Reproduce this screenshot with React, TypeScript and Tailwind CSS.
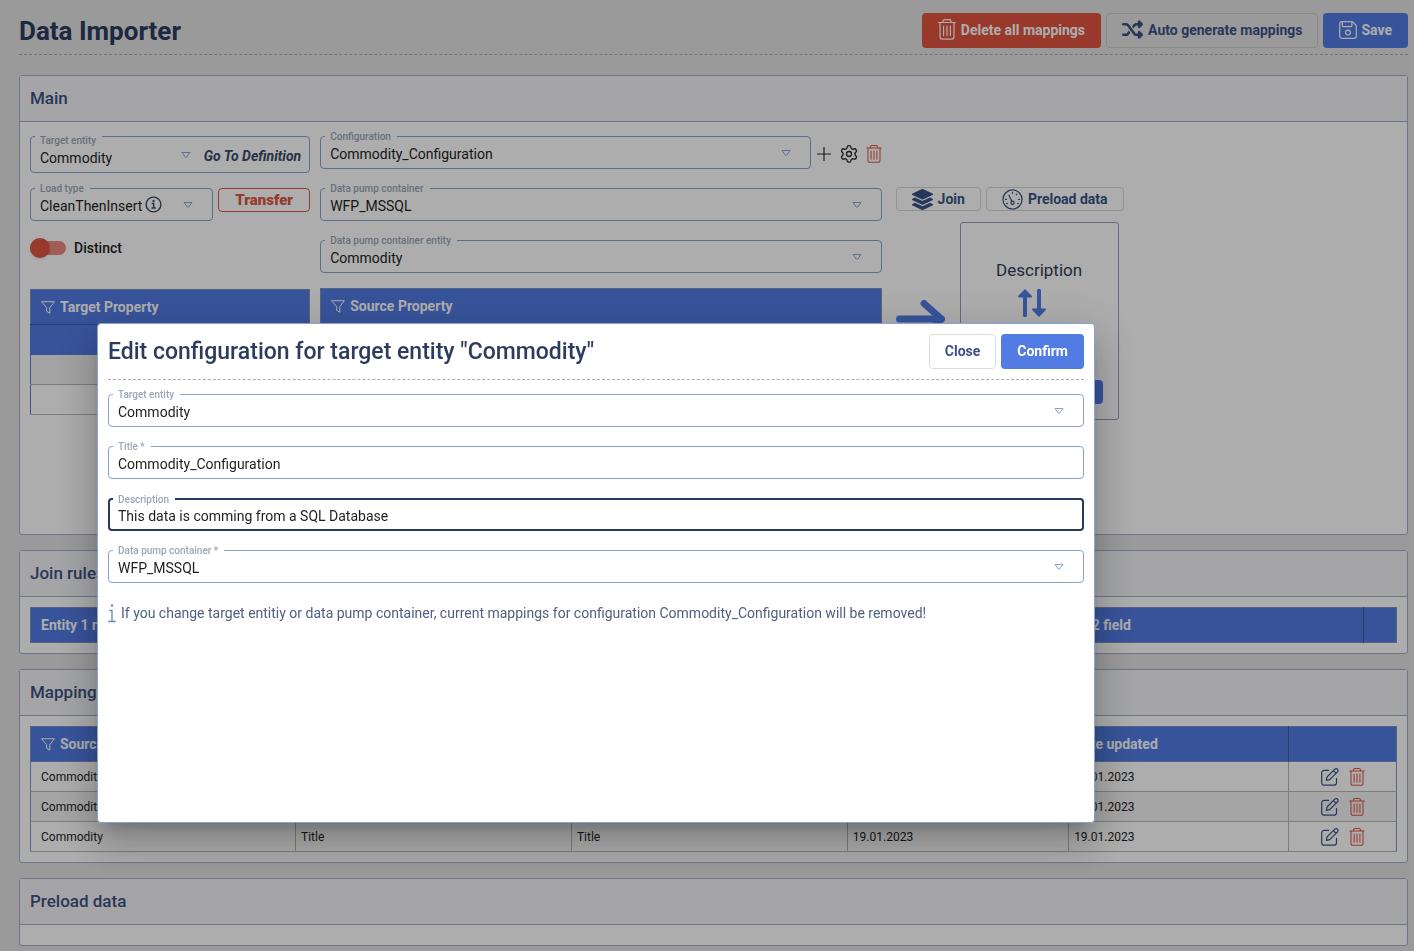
import { useState, type ReactNode } from "react";
import { FaLayerGroup } from "react-icons/fa";
import { FaShuffle } from "react-icons/fa6";
import { Settings } from "lucide-react";

type IconProps = { className?: string };

function TrashIcon({ className }: IconProps) {
  return (
    <svg viewBox="0 0 18 21" fill="none" stroke="currentColor" strokeWidth="1.2" strokeLinecap="round" className={className} aria-hidden="true">
      <path d="M.6 3.5h16.8M5 3.5V2.2C5 1.3 5.6.7 6.4.7h5.2c.8 0 1.4.6 1.4 1.5v1.3" />
      <path d="M2 3.5v14.2c0 1.4 1 2.4 2.3 2.4h9.4c1.3 0 2.3-1 2.3-2.4V3.5" />
      <path d="M5.6 7v9.6M9 7v9.6M12.4 7v9.6" />
    </svg>
  );
}

function SaveIcon({ className }: IconProps) {
  return (
    <svg viewBox="0 0 18 18" fill="none" stroke="currentColor" strokeWidth="1.2" strokeLinejoin="round" className={className} aria-hidden="true">
      <path d="M2.9.7h10.6l3.8 3.8v10.6a2.2 2.2 0 0 1-2.2 2.2H2.9a2.2 2.2 0 0 1-2.2-2.2V2.9A2.2 2.2 0 0 1 2.9.7Z" />
      <path d="M3.3.9v3.7c0 .6.4 1 1 1h7.6c.6 0 1-.4 1-1V.9" />
      <circle cx="9" cy="11.6" r="2.4" />
    </svg>
  );
}

function FilterIcon({ className }: IconProps) {
  return (
    <svg viewBox="0 0 14 13" fill="none" stroke="currentColor" strokeWidth="1" strokeLinejoin="round" className={className} aria-hidden="true">
      <path d="M.6.7h12.8L8.8 6.6v5.7l-3.2-2.1V6.6Z" />
    </svg>
  );
}

function CaretIcon({ className }: IconProps) {
  return (
    <svg viewBox="0 0 10 7" fill="none" stroke="currentColor" strokeWidth="1" strokeLinejoin="round" className={className} aria-hidden="true">
      <path d="M1 1h8L5.6 5.6q-.6.6-1.2 0Z" />
    </svg>
  );
}

function InfoIcon({ className }: IconProps) {
  return (
    <svg viewBox="0 0 18 18" fill="none" stroke="currentColor" strokeWidth="1.5" className={className} aria-hidden="true">
      <circle cx="9" cy="9" r="7.8" />
      <path d="M7 8h2.2v4.5M6.8 12.7h4.6" />
      <circle cx="9" cy="5.3" r="1.2" fill="currentColor" stroke="none" />
    </svg>
  );
}

function GaugeIcon({ className }: IconProps) {
  return (
    <svg viewBox="0 0 22 22" fill="none" stroke="currentColor" strokeWidth="1.3" strokeLinecap="round" className={className} aria-hidden="true">
      <circle cx="11" cy="11" r="10" />
      <circle cx="11" cy="14.5" r="1.7" />
      <path d="m10.3 12.9-3-6.4M11 3.6v.9M15.4 5.4l-.5.7M18.4 10.8h-1M3.6 10.8h1M17 15.4l-.7-.4M5 15.4l.7-.4" />
    </svg>
  );
}

function EditIcon({ className }: IconProps) {
  return (
    <svg viewBox="0 0 18 18" fill="none" stroke="currentColor" strokeWidth="1.2" strokeLinecap="round" strokeLinejoin="round" className={className} aria-hidden="true">
      <path d="M7.6 2.4H3.2A2.5 2.5 0 0 0 .7 4.9v9.8a2.5 2.5 0 0 0 2.5 2.5H13a2.5 2.5 0 0 0 2.5-2.5v-4.4" />
      <path d="M5.4 12.4 6 9l7.8-7.8a1.9 1.9 0 0 1 2.7 2.7l-7.8 7.8ZM12.4 2.6l2.7 2.7" />
    </svg>
  );
}

function SwapIcon({ className }: IconProps) {
  return (
    <svg viewBox="0 0 28 28" fill="currentColor" className={className} aria-hidden="true">
      <path d="M7 0 .3 6.8C-.3 7.6 0 8.5 1 8.5h4v17.7a2 2 0 0 0 4 0V8.5h4c1 0 1.3-.9.7-1.7Z" />
      <path d="m21 28 6.7-6.8c.6-.8.3-1.7-.7-1.7h-4V1.8a2 2 0 0 0-4 0v17.7h-4c-1 0-1.3.9-.7 1.7Z" />
    </svg>
  );
}

type FieldProps = {
  id: string;
  label: string;
  value: string;
  kind?: "select" | "text";
  focused?: boolean;
  tall?: boolean;
  className?: string;
  children?: ReactNode;
};

function Field({ id, label, value, kind = "select", focused, tall, className = "", children }: FieldProps) {
  const [text, setText] = useState(value);
  return (
    <fieldset
      className={`min-w-0 rounded ${focused ? "border-2 border-[#26385c]" : "border border-[#8aa2d0]"} ${tall ? "h-[37px]" : "h-[33px]"} ${className}`}
    >
      <legend className={`flex h-0 items-center pr-[6px] pl-[5px] text-[10px] font-medium text-[#9ba6b8] ${focused ? "ml-[3px]" : "ml-1"}`}>
        <label htmlFor={id} className={tall ? "mt-2" : ""}>{label}</label>
      </legend>
      <div className={`flex items-center ${tall ? "h-[35px]" : focused ? "h-[29px]" : "h-[31px]"}`}>
        <div className="relative min-w-0 flex-1">
          {kind === "select" ? (
            <>
              <select
                id={id}
                defaultValue={value}
                className={`block w-full appearance-none bg-transparent pr-10 pl-[9px] text-sm text-[#1e1e1e] outline-none ${tall ? "pt-[7px]" : "pt-[3px]"}`}
              >
                <option>{value}</option>
              </select>
              <CaretIcon
                className={`pointer-events-none absolute top-1/2 h-[7px] w-[10px] -translate-y-1/2 text-[#8aa2d0] ${tall ? "right-[9px]" : "right-[19px]"}`}
              />
            </>
          ) : (
            <input
              id={id}
              value={text}
              onChange={(e) => setText(e.target.value)}
              className={`block w-full bg-transparent pt-[3px] text-sm text-[#1e1e1e] outline-none ${focused ? "pl-2" : "pl-[9px]"}`}
            />
          )}
        </div>
        {children}
      </div>
    </fieldset>
  );
}

function Panel({ title, children, className = "" }: { title: string; children?: ReactNode; className?: string }) {
  return (
    <section className="rounded-[3px] border border-[#a2afc6] bg-white">
      <h2 className="flex h-[46px] items-center border-b border-[#a2afc6] bg-[#f3f4f7] px-[10px] text-[17px] font-medium text-[#3c5284]">
        {title}
      </h2>
      <div className={`p-[10px] ${className}`}>{children}</div>
    </section>
  );
}

const mappings = [
  { id: 1, source: "Commodity", field: "Code", target: "Code", created: "19.01.2023", updated: "19.01.2023" },
  { id: 2, source: "Commodity", field: "Name", target: "Name", created: "19.01.2023", updated: "19.01.2023" },
  { id: 3, source: "Commodity", field: "Title", target: "Title", created: "19.01.2023", updated: "19.01.2023" },
];

function PropertyTable({ title }: { title: string }) {
  return (
    <table className="w-full border-collapse border border-[#8094bd]">
      <thead>
        <tr className="h-[35px] bg-[#527be4] text-left text-sm text-white">
          <th className="px-[10px] font-bold">
            <span className="flex items-center gap-[5px]">
              <FilterIcon className="h-[13px] w-[14px]" />
              {title}
            </span>
          </th>
        </tr>
      </thead>
      <tbody className="border-x border-[#527be4]">
        <tr className="h-[30px] border-t border-[#3d5ba8] bg-[#527be4]"><td /></tr>
        <tr className="h-[30px] border-b border-[#b8b8b8] bg-[#f0f0f0]"><td /></tr>
        <tr className="h-[30px] border-b border-[#b8b8b8]"><td /></tr>
      </tbody>
    </table>
  );
}

function MainPanel() {
  return (
    <Panel title="Main" className="grid min-h-[412px] grid-cols-[minmax(0,280fr)_minmax(0,561fr)_minmax(0,505fr)] items-start gap-[10px] pt-[14px]">
      <div>
        <Field id="target" label="Target entity" value="Commodity" tall>
          <a href="#definition" className="pt-[3px] pr-2 pl-1 text-sm font-bold text-[#3b4a68] italic">Go To Definition</a>
        </Field>
        <div className="mt-[15px] flex items-start gap-[5px]">
          <div className="relative flex-1">
            <Field id="load" label="Load type" value="CleanThenInsert" />
            <InfoIcon className="absolute top-2 left-[115px] size-[17px] text-[#3b4a68]" />
          </div>
          <button className="flex h-6 w-[92px] items-center justify-center rounded border border-[#e05442] text-[15px] font-black text-[#e05442]">
            Transfer
          </button>
        </div>
        <label className="mt-[17px] mb-[31px] flex h-5 items-center gap-2 text-sm font-medium text-[#1e1e1e]">
          <input
            type="checkbox"
            className="relative h-[14px] w-9 appearance-none rounded-full bg-[#e98a7e] before:absolute before:-top-[3px] before:left-0 before:size-5 before:rounded-full before:bg-[#e05442] before:shadow"
          />
          Distinct
        </label>
        <PropertyTable title="Target Property" />
      </div>

      <div>
        <div className="flex items-center">
          <Field id="config" label="Configuration" value="Commodity_Configuration" className="flex-1" />
          <div className="flex items-center gap-[7px] pt-[2px] pl-[5px] text-[#2b2b2b]">
            <button aria-label="Add configuration">
              <svg viewBox="0 0 16 16" stroke="currentColor" strokeWidth="1.2" className="size-4" aria-hidden="true">
                <path d="M8 1v14M1 8h14" />
              </svg>
            </button>
            <button aria-label="Edit configuration"><Settings className="size-5" strokeWidth={1.6} /></button>
            <button aria-label="Delete configuration"><TrashIcon className="h-[18px] w-4 text-[#e05442]" /></button>
          </div>
        </div>
        <Field id="container" label="Data pump container" value="WFP_MSSQL" className="mt-[19px]" />
        <Field id="entity" label="Data pump container entity" value="Commodity" className="mt-[19px] mb-[15px]" />
        <PropertyTable title="Source Property" />
      </div>

      <div className="pl-1">
        <div className="mt-[51px] flex gap-[5px] text-sm font-bold text-[#3c5284]">
          <button className="flex h-6 items-center gap-[5px] rounded border border-[#d6d6d6] px-[15px]">
            <FaLayerGroup className="size-[21px]" />
            Join
          </button>
          <button className="flex h-6 items-center gap-[5px] rounded border border-[#d6d6d6] px-[15px]">
            <GaugeIcon className="size-[21px]" />
            Preload data
          </button>
        </div>
        <div className="mt-[11px] flex items-center gap-[15px]">
          <svg viewBox="0 0 49 42" fill="none" stroke="currentColor" strokeWidth="7" strokeLinecap="round" strokeLinejoin="round" className="h-[42px] w-[49px] text-[#527be4]" aria-hidden="true">
            <path d="M3.5 19h42M28 3.500 45.500 19 28 36.500" />
          </svg>
          <div className="flex h-[198px] w-[159px] flex-col items-center rounded-[3px] border border-[#94a0b5] px-[15px] pt-[35px] pb-[15px] text-[#303d58]">
            <span className="text-[17px] leading-6">Description</span>
            <SwapIcon className="mt-[7px] mr-[15px] size-7 text-[#527be4]" />
            <button aria-label="Map" className="mt-auto h-6 w-full rounded bg-[#527be4]" />
          </div>
        </div>
      </div>
    </Panel>
  );
}

function MappingTable() {
  return (
    <table className="w-full table-fixed border-collapse text-left">
      <colgroup>
        <col className="w-[19.4%]" />
        <col className="w-[20.2%]" />
        <col className="w-[20.2%]" />
        <col className="w-[16.2%]" />
        <col className="w-[16.1%]" />
        <col />
      </colgroup>
      <thead>
        <tr className="h-[35px] border border-[#8094bd] bg-[#527be4] text-sm text-white">
          <th className="border-r border-[#3d5ba8] px-[10px] font-bold">
            <span className="flex items-center gap-[5px]">
              <FilterIcon className="h-[13px] w-[14px]" />
              Source entity
            </span>
          </th>
          <th className="border-r border-[#3d5ba8] px-[5px] font-bold">Source property</th>
          <th className="border-r border-[#3d5ba8] px-[5px] font-bold">Target property</th>
          <th className="border-r border-[#3d5ba8] px-[5px] font-bold">Date created</th>
          <th className="border-r border-[#3d5ba8] px-[5px] font-bold">Date updated</th>
          <th />
        </tr>
      </thead>
      <tbody className="border-x border-[#7d98d6] text-xs text-[#1e1e1e]">
        {mappings.map((m) => (
          <tr key={m.id} className="h-[30px] border-b border-[#b8b8b8] even:bg-[#f3f3f3]">
            <td className="border-r border-[#b8b8b8] px-[10px]">{m.source}</td>
            <td className="border-r border-[#b8b8b8] px-[5px]">{m.field}</td>
            <td className="border-r border-[#b8b8b8] px-[5px]">{m.target}</td>
            <td className="border-r border-[#b8b8b8] px-[5px]">{m.created}</td>
            <td className="border-r border-[#b8b8b8] px-[5px]">{m.updated}</td>
            <td>
              <div className="flex items-center justify-center gap-[10px]">
                <button aria-label="Edit mapping"><EditIcon className="size-[18px] text-[#3c5284]" /></button>
                <button aria-label="Delete mapping"><TrashIcon className="h-[18px] w-4 text-[#e05442]" /></button>
              </div>
            </td>
          </tr>
        ))}
      </tbody>
    </table>
  );
}

function JoinTable() {
  return (
    <table className="w-full table-fixed border-collapse text-left">
      <colgroup>
        <col className="w-[24.8%]" />
        <col className="w-[24.8%]" />
        <col className="w-[24.8%]" />
        <col />
        <col className="w-[33px]" />
      </colgroup>
      <thead>
        <tr className="h-[35px] border border-[#8094bd] bg-[#527be4] text-sm text-white">
          <th className="border-r border-[#3d5ba8] px-[10px] font-bold">Entity 1 name</th>
          <th className="border-r border-[#3d5ba8] px-[5px] font-bold">Entity 1 field</th>
          <th className="border-r border-[#3d5ba8] px-[5px] font-bold">Entity 2 name</th>
          <th className="border-r border-[#3d5ba8] px-[5px] font-bold">Entity 2 field</th>
          <th />
        </tr>
      </thead>
    </table>
  );
}

function EditDialog() {
  return (
    <div className="fixed inset-0 bg-black/32 pt-[323px] pr-[319px] pl-[97px]">
      <div
        role="dialog"
        aria-labelledby="dialog-title"
        className="h-[500px] rounded border border-[#8aa2d0] bg-white p-[10px] shadow-[0_11px_15px_-7px_rgba(0,0,0,0.2),0_24px_38px_3px_rgba(0,0,0,0.14),0_9px_46px_8px_rgba(0,0,0,0.12)]"
      >
        <div className="mb-[14px] flex items-start justify-between border-b border-dashed border-[#a8acb8] pb-[10px]">
          <h2 id="dialog-title" className="text-[23px] leading-[35px] font-medium text-[#2b3c5e]">
            Edit configuration for target entity "Commodity"
          </h2>
          <div className="flex gap-[5px] text-sm font-bold">
            <button className="h-[35px] rounded border border-[#dcdcdc] px-[15px] pb-[2px] text-[#3c5284]">Close</button>
            <button className="h-[35px] rounded bg-[#527be4] px-4 pb-[2px] text-white">Confirm</button>
          </div>
        </div>
        <div className="flex flex-col gap-[19px]">
          <Field id="dlg-target" label="Target entity" value="Commodity" />
          <Field id="dlg-name" label="Title *" value="Commodity_Configuration" kind="text" />
          <Field id="dlg-description" label="Description" value="This data is comming from a SQL Database" kind="text" focused />
          <Field id="dlg-container" label="Data pump container *" value="WFP_MSSQL" />
        </div>
        <p className="mt-5 flex items-center gap-[5px] text-sm text-[#4f6080]">
          <svg viewBox="0 0 8 19" fill="none" stroke="currentColor" strokeWidth="1.3" className="h-[19px] w-2 text-[#6484c6]" aria-hidden="true">
            <path d="M.3 17.5h7.4M4 17.5v-11H1.3" />
            <circle cx="4" cy="1.5" r="1.2" fill="currentColor" stroke="none" />
          </svg>
          If you change target entitiy or data pump container, current mappings for configuration Commodity_Configuration will be removed!
        </p>
      </div>
    </div>
  );
}

export default function App() {
  return (
    <div className="min-h-screen bg-[#e4e4e4] pr-[6px] pl-[19px] font-[Roboto,sans-serif]">
      <header className="mb-5 flex items-center justify-between border-b border-dashed border-[#a5a9bd] pt-[13px] pb-[6px]">
        <h1 className="text-[26px] leading-8 font-bold text-[#2b3b60]">Data Importer</h1>
        <div className="flex gap-[5px] text-sm font-bold">
          <button className="flex h-[35px] items-center gap-[5px] rounded bg-[#e05442] px-4 pb-[2px] text-white">
            <TrashIcon className="h-[21px] w-[18px]" />
            Delete all mappings
          </button>
          <button className="flex h-[35px] items-center gap-[5px] rounded border border-[#cacaca] px-[15px] pb-[2px] text-[#3c5284]">
            <FaShuffle className="size-[21px]" />
            Auto generate mappings
          </button>
          <button className="flex h-[35px] items-center gap-1 rounded bg-[#527be4] px-4 pb-[2px] text-white">
            <SaveIcon className="size-[18px]" />
            Save
          </button>
        </div>
      </header>

      <main className="flex flex-col gap-[15px]">
        <MainPanel />
        <Panel title="Join rules"><JoinTable /></Panel>
        <Panel title="Mappings"><MappingTable /></Panel>
        <Panel title="Preload data" />
      </main>

      <EditDialog />
    </div>
  );
}
